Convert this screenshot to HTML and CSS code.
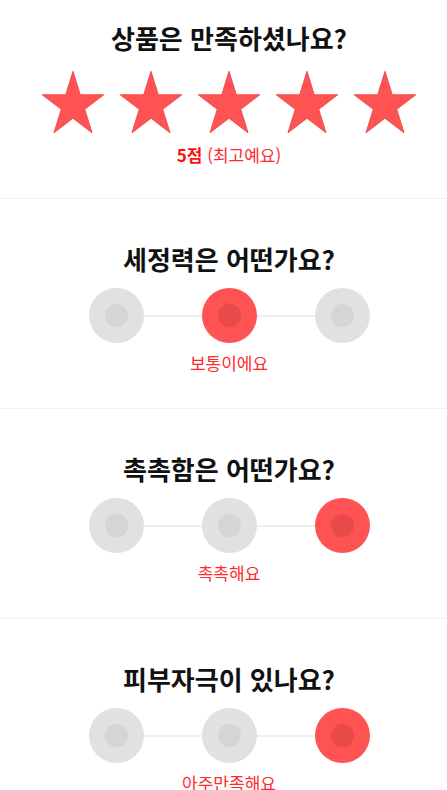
FILE: index.html
```html
<!DOCTYPE html>
<html lang="ko">
<head>
    <meta charset="UTF-8">
    <meta name="viewport" content="width=device-width, initial-scale=1.0">
    <title>리뷰 작성</title>
    <link rel="stylesheet" href="styles.css">
</head>
<body>
    <div id="review">
        <!-- Star rating -->
        <section class="question first">
            <h2 class="question-title">상품은 만족하셨나요?</h2>
            <div class="stars">
                <svg class="star" viewBox="-2 -2 104 99" preserveAspectRatio="none"><path d="M50 0L61.8 36.33L100 36.33L69.1 58.77L80.9 95.1L50 72.65L19.1 95.1L30.9 58.77L0 36.33L38.2 36.33Z"/></svg>
                <svg class="star" viewBox="-2 -2 104 99" preserveAspectRatio="none"><path d="M50 0L61.8 36.33L100 36.33L69.1 58.77L80.9 95.1L50 72.65L19.1 95.1L30.9 58.77L0 36.33L38.2 36.33Z"/></svg>
                <svg class="star" viewBox="-2 -2 104 99" preserveAspectRatio="none"><path d="M50 0L61.8 36.33L100 36.33L69.1 58.77L80.9 95.1L50 72.65L19.1 95.1L30.9 58.77L0 36.33L38.2 36.33Z"/></svg>
                <svg class="star" viewBox="-2 -2 104 99" preserveAspectRatio="none"><path d="M50 0L61.8 36.33L100 36.33L69.1 58.77L80.9 95.1L50 72.65L19.1 95.1L30.9 58.77L0 36.33L38.2 36.33Z"/></svg>
                <svg class="star" viewBox="-2 -2 104 99" preserveAspectRatio="none"><path d="M50 0L61.8 36.33L100 36.33L69.1 58.77L80.9 95.1L50 72.65L19.1 95.1L30.9 58.77L0 36.33L38.2 36.33Z"/></svg>
            </div>
            <div class="answer"><b>5점</b> (최고예요)</div>
        </section>

        <!-- 3-step scales -->
        <section class="question">
            <h2 class="question-title">세정력은 어떤가요?</h2>
            <div class="scale">
                <span class="dot"></span><span class="bar"></span>
                <span class="dot active"></span><span class="bar"></span>
                <span class="dot"></span>
            </div>
            <div class="answer">보통이에요</div>
        </section>

        <section class="question">
            <h2 class="question-title">촉촉함은 어떤가요?</h2>
            <div class="scale">
                <span class="dot"></span><span class="bar"></span>
                <span class="dot"></span><span class="bar"></span>
                <span class="dot active"></span>
            </div>
            <div class="answer">촉촉해요</div>
        </section>

        <section class="question">
            <h2 class="question-title">피부자극이 있나요?</h2>
            <div class="scale">
                <span class="dot"></span><span class="bar"></span>
                <span class="dot"></span><span class="bar"></span>
                <span class="dot active"></span>
            </div>
            <div class="answer">아주만족해요</div>
        </section>
    </div>
</body>
</html>
```

FILE: styles.css
```css
/* Reset */
* { margin: 0; padding: 0; box-sizing: border-box; font-family: "Noto Sans CJK KR", "Noto Sans", sans-serif; }
body { background-color: #fff; color: #111; }

/* Question block */
.question { display: flex; flex-direction: column; align-items: center; padding: 43px 0 34px 11px; border-bottom: 1px solid #f0f0f0; }
.question.first { padding: 21px 0 32px 11px; }
.question-title { font-size: 26px; line-height: 34px; font-weight: 700; color: #111; }

.answer { margin-top: 9px; font-size: 17px; line-height: 22px; color: #ff2b2b; }
.answer b { color: #ff0f0f; font-weight: 700; }

/* Stars */
.stars { display: flex; gap: 14px; margin-top: 15px; }
.star { width: 64px; height: 64px; }
.star path { fill: #ff5353; stroke: #ec4b4b; stroke-width: 1.5; stroke-linejoin: round; }
.first .answer { margin-top: 10px; }

/* Scale */
.scale { display: flex; align-items: center; margin-top: 12px; }
.dot { width: 55px; height: 55px; border-radius: 50%; background-color: #e1e1e1; display: flex; align-items: center; justify-content: center; }
.dot::after { content: ""; width: 23px; height: 23px; border-radius: 50%; background-color: #d5d5d5; }
.dot.active { background-color: #ff5353; }
.dot.active::after { background-color: #e84a4a; }
.bar { width: 58px; height: 2px; background-color: #eeeeee; }
```
